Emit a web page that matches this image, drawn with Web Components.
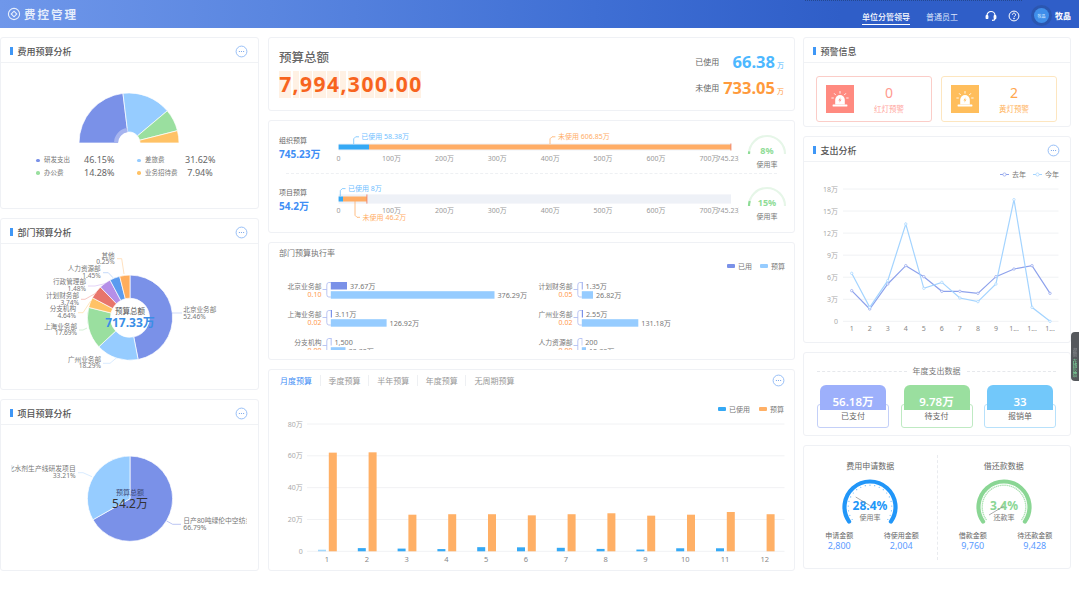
<!DOCTYPE html>
<html lang="zh">
<head>
<meta charset="utf-8">
<title>费控管理</title>
<style>
  html, body { margin: 0; height: 100%; background: #fff; overflow: hidden; }
  body { font-family: "Noto Sans", "Noto Sans CJK SC", sans-serif; color: #666; }
  .board { display: grid; grid-template-columns: 259px 527px 267px; column-gap: 9px; padding: 9px 0 0 0; align-items: start; }
  .col { display: flex; flex-direction: column; gap: 9px; }
  .col.center { margin-left: 0; }
  .col.right { margin-left: -1px; width: 268px; }
</style>
</head>
<body>
<fk-header></fk-header>
<div class="board">
  <div class="col">
    <fk-card heading="费用预算分析" menu style="height:172px"><fk-rose></fk-rose></fk-card>
    <fk-card heading="部门预算分析" menu style="height:172px"><fk-dept-donut></fk-dept-donut></fk-card>
    <fk-card heading="项目预算分析" menu style="height:172px"><fk-project-pie></fk-project-pie></fk-card>
  </div>
  <div class="col center">
    <fk-card style="height:74px"><fk-total></fk-total></fk-card>
    <fk-card style="height:113px"><fk-budget-bars></fk-budget-bars></fk-card>
    <fk-card style="height:118px"><fk-dept-rate></fk-dept-rate></fk-card>
    <fk-card style="height:202px"><fk-monthly></fk-monthly></fk-card>
  </div>
  <div class="col right">
    <fk-card heading="预警信息" style="height:90px"><fk-alarms></fk-alarms></fk-card>
    <fk-card heading="支出分析" menu style="height:207px"><fk-spend-lines></fk-spend-lines></fk-card>
    <fk-card style="height:84px"><fk-year-data></fk-year-data></fk-card>
    <fk-card style="height:124px"><fk-apply-data></fk-apply-data></fk-card>
  </div>
</div>
<fk-side-tab></fk-side-tab>

<script>
// svg helpers, everything is drawn in page coordinates through the viewBox
const pt = (cx, cy, r, deg) => {
  const a = (deg - 90) * Math.PI / 180;
  return [cx + r * Math.cos(a), cy + r * Math.sin(a)];
};
const slice = (cx, cy, r0, r1, a0, a1, fill, stroke = '#fff') => {
  const big = a1 - a0 > 180 ? 1 : 0;
  const [x1, y1] = pt(cx, cy, r1, a0), [x2, y2] = pt(cx, cy, r1, a1);
  const [x3, y3] = pt(cx, cy, r0, a1), [x4, y4] = pt(cx, cy, r0, a0);
  return `<path d="M${x1} ${y1}A${r1} ${r1} 0 ${big} 1 ${x2} ${y2}L${x3} ${y3}A${r0} ${r0} 0 ${big} 0 ${x4} ${y4}Z" fill="${fill}" stroke="${stroke}" stroke-width=".7"/>`;
};
const arc = (cx, cy, r, a0, a1, color, w, cap = 'round') => {
  const big = a1 - a0 > 180 ? 1 : 0;
  const [x1, y1] = pt(cx, cy, r, a0), [x2, y2] = pt(cx, cy, r, a1);
  return `<path d="M${x1} ${y1}A${r} ${r} 0 ${big} 1 ${x2} ${y2}" fill="none" stroke="${color}" stroke-width="${w}" stroke-linecap="${cap}"/>`;
};
const txt = (x, y, s, o = {}) =>
  `<text x="${x}" y="${y}" dominant-baseline="central" text-anchor="${o.a || 'start'}" font-size="${o.s || 7}" fill="${o.f || '#888'}" font-weight="${o.w || 400}">${s}</text>`;
const line = (pts, color, w = .8) =>
  `<polyline points="${pts.join(' ')}" fill="none" stroke="${color}" stroke-width="${w}"/>`;
const rect = (x, y, w, h, fill, extra = '') => `<rect x="${x}" y="${y}" width="${w}" height="${h}" fill="${fill}" ${extra}/>`;
const svgStyle = `svg{display:block;font-family:"Noto Sans","Noto Sans CJK SC",sans-serif}`;

class FkElement extends HTMLElement {
  connectedCallback() {
    if (this.shadowRoot) return;
    this.attachShadow({ mode: 'open' });
    this.shadowRoot.innerHTML = this.render();
  }
}

class FkHeader extends FkElement {
  render() {
    return `<style>
      :host { display: flex; align-items: center; height: 28px; color: #fff; position: relative;
        background: linear-gradient(90deg, #6f97ea 0%, #5a86e0 25%, #3f6fd4 55%, #2f5ec8 78%, #2f5ec8 100%); }
      :host::after { content: ""; position: absolute; top: 0; left: 805px; width: 217px; border-top: 1px dotted #24488f; }
      .logo { display: flex; align-items: center; gap: 3px; margin-left: 7px; }
      .name { font-size: 11.5px; font-weight: 700; letter-spacing: 2px; color: #e6eefc; }
      nav { margin-left: auto; display: flex; gap: 16px; font-size: 8px; align-items: center; }
      nav span { padding: 4px 0 2px; border-bottom: 1px solid transparent; color: #dbe6fb; margin-top: 3px; }
      nav .on { color: #fff; font-weight: 500; border-bottom-color: #fff; }
      .tools { display: flex; align-items: center; margin-left: 27px; margin-right: 8px; margin-top: 3px; }
      .tools svg { display: block; }
      .tools svg + svg { margin-left: 11px; }
      .avatar { width: 15px; height: 15px; border-radius: 50%; background: #3f8eea; margin-left: 14px; margin-right: 6px;
        box-shadow: 0 0 0 3px #2b56b0; font-size: 4px; display: flex; align-items: center; justify-content: center; color: #dcecff; }
      .user { font-size: 8px; font-weight: 700; }
    </style>
    <div class="logo">
      <svg width="14" height="14" viewBox="0 0 14 14"><circle cx="7" cy="7" r="5.6" fill="none" stroke="#e6eefc" stroke-width="1.1"/><path d="M7 4.2L9.8 7 7 9.8 4.2 7Z" fill="none" stroke="#e6eefc" stroke-width="1.1"/></svg>
      <span class="name">费控管理</span>
    </div>
    <nav><span class="on">单位分管领导</span><span>普通员工</span></nav>
    <div class="tools">
      <svg width="12" height="12" viewBox="0 0 12 12" fill="none" stroke="#fff" stroke-width="1.2"><path d="M2 7V5.5a4 4 0 0 1 8 0V7"/><rect x="1.2" y="5.5" width="1.6" height="3" rx=".6" fill="#fff"/><rect x="9.2" y="5.5" width="1.6" height="3" rx=".6" fill="#fff"/><path d="M10 8.5c0 1.3-1.2 1.9-3 1.9"/></svg>
      <svg width="12" height="12" viewBox="0 0 12 12" fill="none" stroke="#fff" stroke-width="1"><circle cx="6" cy="6" r="4.9"/><path d="M4.4 4.7a1.6 1.6 0 1 1 2.4 1.4c-.6.4-.8.6-.8 1.2"/><circle cx="6" cy="8.7" r=".35" fill="#fff"/></svg>
      <div class="avatar">牧晶</div>
      <span class="user">牧晶</span>
    </div>`;
  }
}

class FkCard extends FkElement {
  render() {
    const head = this.getAttribute('heading');
    const more = `<svg width="13" height="13" viewBox="0 0 13 13"><circle cx="6.5" cy="6.5" r="5.4" fill="#fff" stroke="#8db8f5" stroke-width=".9"/><g fill="#6f9fe8"><circle cx="4.4" cy="6.5" r=".6"/><circle cx="6.5" cy="6.5" r=".6"/><circle cx="8.6" cy="6.5" r=".6"/></g></svg>`;
    return `<style>
      :host { display: flex; flex-direction: column; box-sizing: border-box; background: #fff; border: 1px solid #eff1f5; border-radius: 3px; overflow: hidden; }
      header { flex: none; box-sizing: border-box; height: 25px; display: flex; align-items: center; border-bottom: 1px solid #f0f2f5; padding: 2px 10px 0 9px; }
      i { width: 2.5px; height: 8px; background: #3f97f6; margin-right: 5px; }
      h2 { margin: 0; font-size: 9px; font-weight: 500; color: #555; flex: 1; }
      .body { flex: 1; min-height: 0; }
      svg { display: block; }
    </style>
    ${head ? `<header><i></i><h2>${head}</h2>${this.hasAttribute('menu') ? more : ''}</header>` : ''}
    <div class="body"><slot></slot></div>`;
  }
}

class FkRose extends FkElement {
  render() {
    const cx = 129, cy = 143, rows = [[46.15, '#7a91e8'], [31.62, '#96ccff'], [14.28, '#9adf9f'], [7.94, '#ffc266']];
    let a = -90, g = '';
    rows.forEach(([p, c]) => { const b = a + p * 1.8; g += slice(cx, cy, 11, 50, a, b, c); a = b; });
    g += slice(cx, cy, 11, 15, -90, -7, '#a6b4ef', 'none');
    return `<style>:host{display:block}${svgStyle}
      .lg{display:grid;grid-template-columns:8px 40px 53px 8px 40px auto;align-items:center;margin:4px 0 0 35px;row-gap:0;font-size:6.5px;color:#777;line-height:12.5px}
      .lg b{width:3.5px;height:3.5px;border-radius:50%}
      .lg em{font-style:normal;font-size:9px;color:#666}
    </style>
    <svg width="257" height="87" viewBox="1 63 257 87">${g}</svg>
    <div class="lg">
      <b style="background:#7a91e8"></b><span>研发支出</span><em>46.15%</em><b style="background:#96ccff"></b><span>差旅费</span><em>31.62%</em>
      <b style="background:#9adf9f"></b><span>办公费</span><em>14.28%</em><b style="background:#ffc266"></b><span>业务招待费</span><em>&nbsp;7.94%</em>
    </div>`;
  }
}

class FkDeptDonut extends FkElement {
  render() {
    const cx = 130, cy = 316.7, marks = [0, 169, 227, 284, 298, 316, 332, 346, 360];
    const colors = ['#7a91e8', '#96ccff', '#9adf9f', '#ffc266', '#e8756b', '#b58fe8', '#5b9bef', '#ffad5c'];
    let g = '';
    colors.forEach((c, i) => { g += slice(cx, cy, 19.5, 42.6, marks[i], marks[i + 1], c); });
    const labels = [
      ['北京业务部', '52.46%', 183.3, 308.3, 'start', '#c5d2f5', [[172, 312], [182, 312]]],
      ['广州业务部', '18.29%', 101, 358, 'end', '#cfe6ff', [[116.7, 356.7], [110, 362.3], [103, 362.3]]],
      ['上海业务部', '17.69%', 77, 325, 'end', '#c9eccc', [[87, 327], [83, 329], [79, 329]]],
      ['分支机构', '4.64%', 76, 307.7, 'end', '#ffe0b0', [[90.7, 300], [83, 311.7], [78, 311.7]]],
      ['计划财务部', '3.74%', 79, 294.3, 'end', '#f5b8b2', [[96.7, 291.7], [85, 298.3], [81, 298.3]]],
      ['行政管理部', '1.48%', 86, 280.7, 'end', '#dcc9f5', [[105, 282.7], [95, 285], [88, 285]]],
      ['人力资源部', '1.45%', 100.7, 267.3, 'end', '#b8d2f7', [[113, 276.7], [108.3, 271.7], [103, 271.7]]],
      ['其他', '0.25%', 114.7, 254, 'end', '#ffd9b0', [[124, 273], [121.7, 257.7], [117, 257.7]]]
    ];
    labels.forEach(([n, p, x, y, an, lc, pts]) => {
      g += line(pts, lc) + txt(x, y, n, { a: an, f: '#777', s: 6.6 }) + txt(x, y + 6.8, p, { a: an, f: '#777', s: 6.6 });
    });
    g += txt(cx, 310, '预算总额', { a: 'middle', s: 7.5, f: '#555' });
    g += txt(cx, 321.7, '717.33万', { a: 'middle', s: 12, f: '#3a8ee6', w: 700 });
    return `<style>:host{display:block}${svgStyle}</style><svg width="257" height="146" viewBox="1 243 257 146">${g}</svg>`;
  }
}

class FkProjectPie extends FkElement {
  render() {
    const cx = 130, cy = 497.7;
    let g = slice(cx, cy, 0, 42.6, 0, 240.4, '#7a91e8') + slice(cx, cy, 0, 42.6, 240.4, 360, '#96ccff');
    g += line([[92, 475.7], [83, 471.7], [78, 471.7]], '#cfe6ff') + line([[166.7, 520], [172.7, 523.3], [181, 523.3]], '#a9b8f0');
    g += `<g clip-path="url(#pc)">${txt(75.7, 467.7, '化水剂生产线研发项目', { a: 'end', f: '#777', s: 6.8 })}${txt(183.3, 519, '日产80吨绿伦中空纺丝项目', { f: '#777', s: 6.8 })}</g>`;
    g += txt(75.7, 474.7, '33.21%', { a: 'end', f: '#777', s: 6.8 }) + txt(183.3, 526, '66.79%', { f: '#777', s: 6.8 });
    g += txt(cx, 491, '预算总额', { a: 'middle', s: 7, f: '#3c4a78' }) + txt(cx, 502.7, '54.2万', { a: 'middle', s: 12, f: '#333' });
    return `<style>:host{display:block}${svgStyle}</style><svg width="257" height="146" viewBox="1 424 257 146"><clipPath id="pc"><rect x="11.7" y="440" width="235" height="110"/></clipPath>${g}</svg>`;
  }
}

class FkTotal extends FkElement {
  render() {
    const cells = [...'7,994,300.00'].map(c => `<span class="${/\d/.test(c) ? 'd' : 'p'}">${c}</span>`).join('');
    return `<style>
      :host { display: flex; justify-content: space-between; box-sizing: border-box; height: 72px; padding: 11px 10px 0 10px; }
      h3 { margin: 0 0 4px; font-size: 12.5px; line-height: 18px; font-weight: 500; color: #666; }
      .num { display: flex; gap: 1.25px; }
      .num span { background: #fff1e4; color: #f7641e; font-size: 21px; font-weight: 700; height: 27px; line-height: 27px; text-align: center; }
      .d { width: 12.3px; } .p { width: 6px; }
      .use { display: grid; grid-template-columns: auto auto; column-gap: 4px; align-content: start; align-items: center; margin-top: 1px; row-gap: 2.5px; }
      .use label { font-size: 8px; color: #666; }
      .v { text-align: right; font-size: 16.5px; font-weight: 700; line-height: 23px; height: 23px; }
      .v small { font-size: 7px; font-weight: 400; margin-left: 2px; line-height: 1; }
    </style>
    <div><h3>预算总额</h3><div class="num">${cells}</div></div>
    <div class="use">
      <label>已使用</label><div class="v" style="color:#4db8ff">66.38<small>万</small></div>
      <label>未使用</label><div class="v" style="color:#ff9a3c">733.05<small>万</small></div>
    </div>`;
  }
}

class FkBudgetRow extends FkElement {
  render() {
    const top = +this.getAttribute('top'), h = +this.getAttribute('h');
    const y0 = +this.getAttribute('bar'), used = +this.getAttribute('used'), end = +this.getAttribute('end');
    const pct = +this.getAttribute('pct'), thick = +this.getAttribute('bh');
    let g = rect(338.6, y0, 392.4, thick, '#eef1f7');
    const by = y0 + (thick - 5) / 2;
    g += rect(338.6, by, used - 338.6, 5, '#35a9f5') + rect(used, by, end - used, 5, '#ffad66');
    g += rect(end - .6, y0, 1, thick, '#f08a70');
    const axis = ['0', '100万', '200万', '300万', '400万', '500万', '600万', '700万'];
    axis.forEach((s, i) => { g += txt(338.6 + i * 52.9, y0 + 14.5 + (thick - 7) / 2, s, { a: 'middle', f: '#999' }); });
    g += txt(731, y0 + 14.5 + (thick - 7) / 2, '745.23万', { a: 'middle', f: '#999' });
    g += this.getAttribute('marks').split('|').map(m => {
      const [x1, y1, x2, y2, tx, s, c] = m.split(',');
      return line([[x1, y1], [x1, +y2 + (+y2 < +y1 ? 2 : -2)], [+x1 + 2, y2], [x2, y2]], c) + txt(tx, y2, s, { f: c });
    }).join('');
    const cx = 25, cy = 27;
    const gauge = arc(cx, cy, 18, -90, 90, '#e6f6e8', 2.2, 'butt') + arc(cx, cy, 18, -90, -90 + pct * 1.8 * .6 , '#8edc96', 2.2, 'butt');
    return `<style>
      :host { display: flex; box-sizing: border-box; height: ${h}px; }
      ${svgStyle}
      .who { width: 60px; padding-left: 10px; box-sizing: border-box; }
      .who p { margin: 0; font-size: 7px; color: #666; line-height: 10px; padding-top: ${+this.getAttribute('lt')}px; }
      .who b { font-size: 10px; line-height: 14px; color: #3f8ef5; display: block; margin-top: 1px; white-space: nowrap; }
      .g { width: 50px; margin-left: 3px; text-align: center; }
      .g em { display: block; margin-top: 3px; font-style: normal; font-size: 7px; color: #777; line-height: 10px; }
    </style>
    <div class="who"><p>${this.getAttribute('name')}</p><b>${this.getAttribute('total')}</b></div>
    <svg width="410" height="${h}" viewBox="329 ${top} 410 ${h}">${g}</svg>
    <div class="g" style="margin-top:${+this.getAttribute('gt')}px">
      <svg width="50" height="30" viewBox="0 0 50 30">${gauge}${txt(cx, 23, this.getAttribute('pct') + '%', { a: 'middle', s: 9, f: '#8edc96', w: 700 })}</svg>
      <em>使用率</em>
    </div>`;
  }
}

class FkBudgetBars extends FkElement {
  render() {
    const b = '#6fc0ff', o = '#ffad66';
    return `<style>:host{display:block}
      hr{border:0;border-top:1px dashed #eef0f3;margin:0 17px 0 17px;height:0}
    </style>
    <fk-budget-row name="组织预算" total="745.23万" top="121" h="52" lt="15" gt="6" bar="143.5" bh="7" used="369" end="731" pct="8"
      marks="353.7,144,359,136.8,361.2,已使用 58.38万,${b}|550,144,555.4,136.8,558,未使用 606.85万,${o}"></fk-budget-row>
    <hr>
    <fk-budget-row name="项目预算" total="54.2万" top="174" h="56" lt="14" gt="5" bar="194.4" bh="9.2" used="343" end="367" pct="15"
      marks="340.3,196.4,345.5,188.6,348,已使用 8万,${b}|355,201,360,217.3,362.6,未使用 46.2万,${o}"></fk-budget-row>`;
  }
}

class FkDeptRate extends FkElement {
  render() {
    const rows = [
      [321.5, 330.8, '北京业务部', '0.10', 282, '37.67万', 347, '376.29万', 494.5],
      [321.5, 330.8, '上海业务部', '0.02', 310, '3.11万', 332, '126.92万', 386.6],
      [321.5, 330.8, '分支机构', '0.00', 338, '1,500', 331.4, '33.30万', 345.5],
      [572.5, 581.8, '计划财务部', '0.05', 282, '1.35万', 582.6, '26.82万', 593],
      [572.5, 581.8, '广州业务部', '0.02', 310, '2.55万', 583, '131.18万', 638.3],
      [572.5, 581.8, '人力资源部', '0.00', 338, '200', 582.2, '10.38万', 586]
    ];
    let g = '';
    rows.forEach(([lx, x0, n, rate, y, u, ue, b, be]) => {
      g += `<path d="M${lx + 1} ${y + 7.5}H${x0 - 4}M${x0} ${y + .5}H${x0 - 2}Q${x0 - 4} ${y + .5} ${x0 - 4} ${y + 3}V${y + 12.5}Q${x0 - 4} ${y + 15} ${x0 - 2} ${y + 15}H${x0}" fill="none" stroke="#a9b8f0" stroke-width=".8"/>`;
      g += rect(x0, y, ue - x0, 7.5, '#7a91e8') + rect(x0, y + 9.2, be - x0, 7.5, '#96ccff');
      g += txt(ue + 3, y + 3.8, u, { s: 7.2, f: '#777' }) + txt(be + 3, y + 13, b, { s: 7.2, f: '#777' });
      g += txt(lx, y + 4, n, { a: 'end', s: 6.8, f: '#777' }) + txt(lx, y + 12.5, rate, { a: 'end', s: 7, f: '#ff9a4d' });
    });
    return `<style>:host{display:block}${svgStyle}
      h4{margin:0;padding:5px 0 0 10px;font-size:8px;line-height:10px;font-weight:400;color:#777}
      .lg{display:flex;justify-content:flex-end;gap:8px;padding-right:9px;margin-top:4px;font-size:7px;line-height:10px;color:#777;align-items:center}
      .lg i{display:inline-block;width:8px;height:4px;border-radius:1px;margin-right:3px;vertical-align:1px}
    </style>
    <h4>部门预算执行率</h4>
    <div class="lg"><span><i style="background:#7a91e8"></i>已用</span><span><i style="background:#96ccff"></i>预算</span></div>
    <svg width="525" height="78" viewBox="269 272 525 78">${g}</svg>`;
  }
}

class FkMonthly extends FkElement {
  render() {
    const used = [1, 2, 1.7, 1.4, 2.6, 2.5, 2.2, 1.5, 1.1, 1.9, 1.9, 0];
    const plan = [62, 62.2, 23, 23.3, 23.3, 22.6, 23.3, 23.9, 22.4, 23, 24.7, 23.3];
    const y = v => 551.3 - v * 127.3 / 80;
    let g = '';
    [80, 60, 40, 20, 0].forEach(v => {
      g += line([[307, y(v)], [784.5, y(v)]], '#f1f2f4', 1);
      g += txt(302.7, y(v), v ? v + '万' : '0', { a: 'end', f: '#aaa' });
    });
    plan.forEach((p, i) => {
      const c = 327 + i * 39.8;
      if (used[i]) g += rect(c - 9, y(used[i]), 8, 551.3 - y(used[i]), i == 0 ? '#a5d8fb' : '#35a9f5');
      g += rect(c + 1.8, y(p), 8, 551.3 - y(p), '#ffb066');
      g += txt(c, 558.7, i + 1, { a: 'middle', s: 7.5, f: '#888' });
    });
    const tabs = ['月度预算', '季度预算', '半年预算', '年度预算', '无周期预算'];
    return `<style>:host{display:block}${svgStyle}
      .top{display:flex;align-items:center;padding:3px 9px 0 11px;height:15px}
      .top span{font-size:8px;line-height:11px;color:#999;padding:0 8px 0 8px;border-left:1px solid #eef0f3;margin-right:-.4px}
      .top span:first-child{color:#3f8ef5;padding-left:0;border-left:0}
      .top svg{margin-left:auto}
      .lg{display:flex;justify-content:flex-end;gap:9px;padding-right:10px;margin-top:17px;font-size:7px;line-height:10px;color:#777}
      .lg i{display:inline-block;width:8px;height:4px;border-radius:1px;margin-right:3px;vertical-align:1px}
    </style>
    <div class="top">${tabs.map(t => `<span>${t}</span>`).join('')}
      <svg width="13" height="13" viewBox="0 0 13 13"><circle cx="6.5" cy="6.5" r="5.4" fill="#fff" stroke="#8db8f5" stroke-width=".9"/><g fill="#6f9fe8"><circle cx="4.4" cy="6.5" r=".6"/><circle cx="6.5" cy="6.5" r=".6"/><circle cx="8.6" cy="6.5" r=".6"/></g></svg>
    </div>
    <div class="lg"><span><i style="background:#35a9f5"></i>已使用</span><span><i style="background:#ffb066"></i>预算</span></div>
    <svg width="525" height="155" viewBox="269 415 525 155">${g}</svg>`;
  }
}

const sirenIcon = `<svg width="28" height="28" viewBox="0 0 28 28"><g fill="none" stroke="#fff" stroke-width=".9" stroke-linecap="round"><path d="M14 6.5V8.2M8.4 8.6l1.1 1.2M19.6 8.6l-1.1 1.2M5.8 13h1.6M20.6 13h1.6"/></g><path d="M9.2 19.4v-4.6a4.8 4.8 0 0 1 9.6 0v4.6z" fill="#fff"/><rect x="6.6" y="19.6" width="14.8" height="1.9" rx=".4" fill="#fff"/><path class="bolt" d="M14.6 12.2l-2.2 3.2h1.5l-.6 2.4 2.2-3.2H14z"/></svg>`;

class FkAlarmBox extends FkElement {
  render() {
    const c = this.getAttribute('color');
    return `<style>
      :host { display: flex; align-items: center; box-sizing: border-box; width: 116px; height: 46px; padding: 0 9px; border: 1px solid ${this.getAttribute('edge')}; border-radius: 3px; }
      .ic { width: 28px; height: 28px; background: ${this.getAttribute('fill')}; flex: none; }
      .ic svg { display: block; } .bolt { fill: ${this.getAttribute('fill')}; }
      .tx { flex: 1; text-align: center; padding-left: 2px; }
      b { display: block; font-size: 14px; line-height: 19px; font-weight: 400; color: ${c}; }
      span { display: block; font-size: 7.5px; line-height: 11px; color: ${this.getAttribute('label')}; margin-top: 2px; }
    </style>
    <div class="ic">${sirenIcon}</div><div class="tx"><b>${this.getAttribute('value')}</b><span>${this.getAttribute('text')}</span></div>`;
  }
}

class FkAlarms extends FkElement {
  render() {
    return `<style>:host{display:flex;gap:9px;padding:13px 0 0 12px}</style>
    <fk-alarm-box value="0" text="红灯预警" fill="#ff8a80" edge="#fbcdc8" color="#ff9a90" label="#ffa59c"></fk-alarm-box>
    <fk-alarm-box value="2" text="黄灯预警" fill="#ffbe5c" edge="#fde6c0" color="#ffa64d" label="#ffb35c"></fk-alarm-box>`;
  }
}

class FkSpendLines extends FkElement {
  render() {
    const ly = v => 135 + v / 3, x = i => 851.7 + i * 18.03;
    const last = [470, 525, 450, 395, 428, 472, 472, 478, 428, 405, 395, 478];
    const cur = [418, 520, 440, 270, 463, 445, 492, 503, 450, 197, 520, 562];
    let g = '';
    ['18万', '15万', '12万', '9万', '6万', '3万', '0'].forEach((s, i) => {
      const y = 190 + i * 22.05;
      g += line([[843, y], [1058.5, y]], '#f0f2f4', 1) + txt(838, y, s, { a: 'end', f: '#aaa' });
    });
    ['1', '2', '3', '4', '5', '6', '7', '8', '9', '1...', '1...', '1...'].forEach((s, i) => {
      g += txt(x(i), 329, s, { a: 'middle', f: '#888' });
    });
    [[last, '#8ea2ec'], [cur, '#a4d4ff']].forEach(([d, c]) => {
      g += line(d.map((v, i) => [x(i), ly(v)]), c, 1.2);
      d.forEach((v, i) => { g += `<circle cx="${x(i)}" cy="${ly(v)}" r="1.2" fill="#fff" stroke="${c}" stroke-width=".7"/>`; });
    });
    const mark = c => `<svg width="9" height="5" viewBox="0 0 9 5" style="display:inline-block;margin-right:3px;vertical-align:0"><path d="M0 2.5H9" stroke="${c}"/><circle cx="4.5" cy="2.5" r="1.6" fill="#fff" stroke="${c}" stroke-width=".7"/></svg>`;
    return `<style>:host{display:block}${svgStyle}
      .lg{display:flex;justify-content:flex-end;gap:7px;height:17px;box-sizing:border-box;padding:8px 11px 0 0;font-size:7px;line-height:10px;color:#777}
    </style>
    <div class="lg"><span>${mark('#8ea2ec')}去年</span><span>${mark('#a4d4ff')}今年</span></div>
    <svg width="266" height="162" viewBox="804 180 266 162">${g}</svg>`;
  }
}

class FkStatTile extends FkElement {
  render() {
    const c = this.getAttribute('color');
    return `<style>
      :host { display: flex; flex-direction: column; width: 72px; }
      .v { position: relative; margin: 0 3px; height: 25px; border-radius: 6px 6px 0 0; background: ${c}; color: #fff; font-size: 11.5px; font-weight: 600; line-height: 33px; text-align: center; }
      .l { margin-top: -6px; height: 24px; box-sizing: border-box; border: 1px solid ${this.getAttribute('edge')}; border-radius: 3px; font-size: 8px; color: #666; text-align: center; padding-top: 5px; line-height: 11px; }
    </style>
    <div class="v">${this.getAttribute('value')}</div><div class="l">${this.getAttribute('text')}</div>`;
  }
}

class FkYearData extends FkElement {
  render() {
    return `<style>
      :host { display: block; padding: 12px 14px 0 13px; }
      h4 { margin: 0; display: flex; align-items: center; gap: 6px; font-size: 8px; line-height: 12px; font-weight: 400; color: #777; }
      h4::before, h4::after { content: ""; flex: 1; border-top: 1px dashed #e6e8ec; }
      .tiles { display: flex; justify-content: space-between; margin-top: 8px; }
    </style>
    <h4>年度支出数据</h4>
    <div class="tiles">
      <fk-stat-tile value="56.18万" text="已支付" color="#9db0fb" edge="#c4d0f8"></fk-stat-tile>
      <fk-stat-tile value="9.78万" text="待支付" color="#9adf9f" edge="#bfeac3"></fk-stat-tile>
      <fk-stat-tile value="33" text="报销单" color="#72c8fa" edge="#b8e1fb"></fk-stat-tile>
    </div>`;
  }
}

class FkGaugeBlock extends FkElement {
  render() {
    const c = this.getAttribute('color'), dense = this.hasAttribute('dense');
    const cx = 33, cy = 32, step = dense ? 5 : 12.5;
    let g = arc(cx, cy, 25.5, -125, 125, c, 4.2);
    for (let a = -125; a <= 125; a += step) {
      const [x, y] = pt(cx, cy, 21.8, a);
      g += `<circle cx="${x}" cy="${y}" r="${dense ? .8 : .6}" fill="${c}" opacity=".7"/>`;
    }
    g += txt(cx, 30, this.getAttribute('pct'), { a: 'middle', s: 12, f: c, w: 700 });
    g += txt(cx, 42.5, this.getAttribute('rate'), { a: 'middle', s: 7, f: '#777' });
    const [a, b, d, e] = this.getAttribute('needle').split(',');
    g += line([[a, b], [d, e]], '#888', .7);
    const stat = (l, v) => `<div><p>${l}</p><b>${v}</b></div>`;
    return `<style>
      :host { display: flex; flex-direction: column; align-items: center; flex: 1; padding-top: 14px; }
      h4 { margin: 0; font-size: 8px; line-height: 12px; font-weight: 400; color: #666; }
      svg { display: block; margin-top: 3px; font-family: "Noto Sans","Noto Sans CJK SC",sans-serif; }
      .s { display: grid; grid-template-columns: 62px 62px; text-align: center; margin-top: 6px; }
      p { margin: 0; font-size: 7px; line-height: 10px; color: #666; }
      b { font-size: 9px; font-weight: 400; line-height: 10px; color: #5b9bff; display: block; }
    </style>
    <h4>${this.getAttribute('heading')}</h4>
    <svg width="66" height="50" viewBox="0 0 66 50">${g}</svg>
    <div class="s">${stat(this.getAttribute('a'), this.getAttribute('av'))}${stat(this.getAttribute('b'), this.getAttribute('bv'))}</div>`;
  }
}

class FkApplyData extends FkElement {
  render() {
    return `<style>
      :host { display: flex; height: 122px; }
      i { flex: none; margin: 9px 0 8px; border-left: 1px dashed #e9ebef; }
    </style>
    <fk-gauge-block heading="费用申请数据" color="#2196f8" pct="28.4%" rate="使用率" needle="18.7,22,33.7,31"
      a="申请金额" av="2,800" b="待使用金额" bv="2,004"></fk-gauge-block>
    <i></i>
    <fk-gauge-block heading="借还款数据" color="#8ad694" dense pct="3.4%" rate="还款率" needle="18,40,33,31"
      a="借款金额" av="9,760" b="待还款金额" bv="9,428"></fk-gauge-block>`;
  }
}

class FkSideTab extends FkElement {
  render() {
    return `<style>
      :host { position: fixed; right: 0; top: 332px; width: 8px; height: 49px; background: #55585c; border-radius: 4px 0 0 4px; display: flex; flex-direction: column; align-items: center; justify-content: flex-end; padding-bottom: 4px; box-sizing: border-box; }
      span { writing-mode: vertical-rl; font-size: 4.5px; line-height: 6px; color: #7fe0a0; }
      span.top { color: #8c8f93; margin-bottom: 2px; }
    </style><span class="top">帮助</span><span>在线反馈</span>`;
  }
}

const defs = {
  'fk-header': FkHeader, 'fk-card': FkCard, 'fk-rose': FkRose, 'fk-dept-donut': FkDeptDonut, 'fk-project-pie': FkProjectPie,
  'fk-total': FkTotal, 'fk-budget-row': FkBudgetRow, 'fk-budget-bars': FkBudgetBars, 'fk-dept-rate': FkDeptRate, 'fk-monthly': FkMonthly,
  'fk-alarm-box': FkAlarmBox, 'fk-alarms': FkAlarms, 'fk-spend-lines': FkSpendLines, 'fk-stat-tile': FkStatTile, 'fk-year-data': FkYearData,
  'fk-gauge-block': FkGaugeBlock, 'fk-apply-data': FkApplyData, 'fk-side-tab': FkSideTab
};
Object.entries(defs).forEach(([name, cls]) => customElements.define(name, cls));
</script>
</body>
</html>
